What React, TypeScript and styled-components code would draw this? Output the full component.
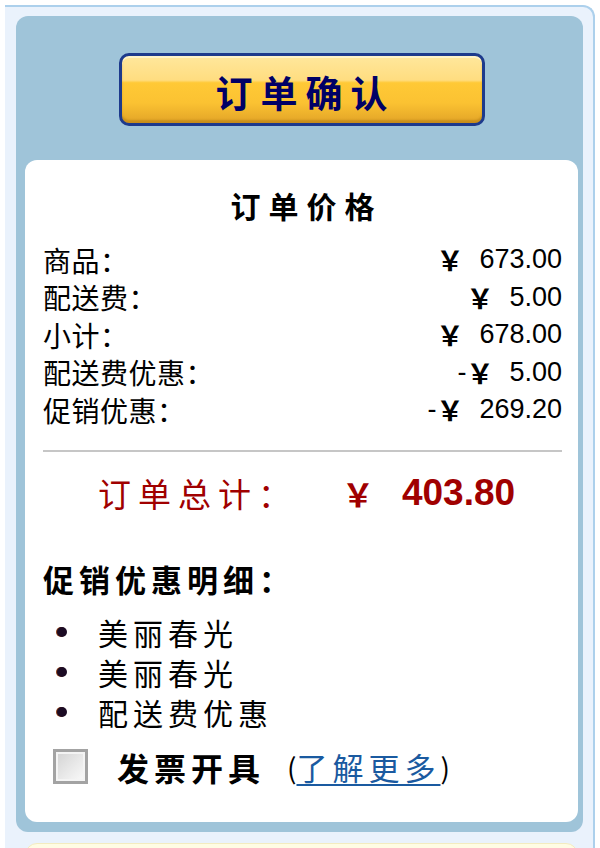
import styled, { createGlobalStyle } from "styled-components";

const GlobalStyle = createGlobalStyle`
  html, body {
    margin: 0;
    padding: 0;
    background: #ffffff;
  }
  body {
    font-family: "Noto Sans CJK SC", "Noto Sans", sans-serif;
    color: #000;
  }
`;

/* внешняя рамка боковой колонки */
const Frame = styled.div`
  margin: 5px 0 0 5px;
  width: 590px;
  height: 843px;
  box-sizing: border-box;
  background: #eaf2fc;
  border-top: 2px solid #acd0ec;
  border-right: 2px solid #acd0ec;
  border-top-right-radius: 12px;
  padding: 9px 10px 0 11px;
  overflow: hidden;
  display: flex;
  flex-direction: column;
  gap: 11px;
`;

const Panel = styled.div`
  background: #9fc4d9;
  border-radius: 12px;
  padding: 37px 5px 10px 9px;
  display: flex;
  flex-direction: column;
  gap: 34px;
`;

const ConfirmButton = styled.button`
  align-self: center;
  width: 366px;
  height: 73px;
  border: 3px solid #1d3a8c;
  border-radius: 10px;
  background: linear-gradient(
    to bottom,
    #ffe79c 0%,
    #ffdd80 36%,
    #ffc936 40%,
    #fbc232 70%,
    #e2a427 100%
  );
  box-shadow: inset 0 2px 0 #fff3c8, inset 0 -3px 2px rgba(150, 100, 0, 0.35);
  color: #000066;
  font-family: "Noto Sans CJK SC", sans-serif;
  font-size: 37px;
  font-weight: 700;
  letter-spacing: 8px;
  padding: 4px 0 0 8px;
  cursor: pointer;
`;

const Card = styled.div<{ $tone?: "white" | "note" }>`
  background: ${({ $tone }) => ($tone === "note" ? "#fffce4" : "#ffffff")};
  border-radius: 12px;
  padding: 25px 16px 0 18px;
  height: ${({ $tone }) => ($tone === "note" ? "40px" : "662px")};
  box-sizing: border-box;
  ${({ $tone }) =>
    $tone === "note" ? "margin: 0 5px 0 9px; border: 1px solid #f3ecc0;" : ""}
`;

const Title = styled.div`
  text-align: center;
  font-size: 30px;
  font-weight: 700;
  line-height: 40px;
  letter-spacing: 8px;
  padding-left: 8px;
`;

const PriceList = styled.div`
  margin-top: 16px;
  display: flex;
  flex-direction: column;
`;

const PriceRow = styled.div`
  display: flex;
  justify-content: space-between;
  align-items: center;
  height: 37.5px;
  font-size: 28px;
`;

const Label = styled.span`
  letter-spacing: 0.5px;
`;

const Amount = styled.span`
  display: inline-flex;
  align-items: center;
  font-family: "Liberation Sans", Arial, sans-serif;
  font-size: 27px;
`;

const Yen = styled.span`
  font-family: "Noto Sans CJK SC", sans-serif;
  font-size: 27px;
  font-weight: 700;
  margin-right: 16px;
`;

const Divider = styled.hr`
  margin: 21px 0 0;
  border: 0;
  height: 2px;
  background: #c6c6c6;
`;

const Total = styled.div`
  margin-top: 19px;
  height: 44px;
  display: flex;
  align-items: center;
  justify-content: center;
  color: #a00000;
  padding-left: 8px;
`;

const TotalLabel = styled.span`
  font-size: 33px;
  letter-spacing: 7px;
`;

const TotalYen = styled.span`
  font-size: 32px;
  font-weight: 700;
  margin: 0 28px 0 44px;
`;

const TotalValue = styled.span`
  font-family: "Liberation Sans", Arial, sans-serif;
  font-size: 37px;
  font-weight: 700;
`;

const SectionTitle = styled.div`
  margin-top: 44px;
  font-size: 31px;
  font-weight: 700;
  line-height: 40px;
  letter-spacing: 5px;
`;

const PromoList = styled.ul`
  list-style: none;
  margin: 13px 0 0;
  padding: 0 0 0 14px;
`;

const PromoItem = styled.li`
  display: flex;
  align-items: center;
  height: 40px;
  font-size: 30px;
  letter-spacing: 5px;

  &::before {
    content: "";
    width: 10px;
    height: 10px;
    border-radius: 50%;
    background: #1b0b24;
    box-shadow: -1px 0 0 #8a3a10;
    margin-right: 31px;
  }
`;

const InvoiceRow = styled.label`
  margin-top: 15px;
  display: flex;
  align-items: center;
  height: 40px;
  padding-left: 10px;
  cursor: pointer;
`;

const CheckBox = styled.span`
  width: 35px;
  height: 35px;
  box-sizing: border-box;
  border: 3px solid #a3a3a3;
  box-shadow: inset 0 0 0 2px #f4f4f4;
  background: linear-gradient(135deg, #d2d2d2 0%, #e9e9e9 55%, #fafafa 100%);
  margin-right: 29px;
`;

const InvoiceText = styled.span`
  font-size: 32px;
  font-weight: 700;
  letter-spacing: 5px;
  margin-right: 22px;
`;

const Paren = styled.span`
  font-size: 28px;
`;

const MoreLink = styled.a`
  color: #1a5aa0;
  font-size: 31px;
  letter-spacing: 5px;
  text-decoration: underline;
  text-decoration-thickness: 2px;
  text-underline-offset: 4px;
`;

type Line = { label: string; value: string; minus?: boolean };

const lines: Line[] = [
  { label: "商品：", value: "673.00" },
  { label: "配送费：", value: "5.00" },
  { label: "小计：", value: "678.00" },
  { label: "配送费优惠：", value: "5.00", minus: true },
  { label: "促销优惠：", value: "269.20", minus: true },
];

const promos = ["美丽春光", "美丽春光", "配送费优惠"];

export default function App() {
  return (
    <>
      <GlobalStyle />
      <Frame>
        <Panel>
          <ConfirmButton>订单确认</ConfirmButton>
          <Card>
            <Title>订单价格</Title>
            <PriceList>
              {lines.map((l) => (
                <PriceRow key={l.label}>
                  <Label>{l.label}</Label>
                  <Amount>
                    {l.minus ? "-" : null}
                    <Yen>￥</Yen>
                    {l.value}
                  </Amount>
                </PriceRow>
              ))}
            </PriceList>
            <Divider />
            <Total>
              <TotalLabel>订单总计：</TotalLabel>
              <TotalYen>￥</TotalYen>
              <TotalValue>403.80</TotalValue>
            </Total>
            <SectionTitle>促销优惠明细：</SectionTitle>
            <PromoList>
              {promos.map((p, i) => (
                <PromoItem key={i}>{p}</PromoItem>
              ))}
            </PromoList>
            <InvoiceRow>
              <CheckBox />
              <InvoiceText>发票开具</InvoiceText>
              <Paren>(</Paren>
              <MoreLink href="#">了解更多</MoreLink>
              <Paren>)</Paren>
            </InvoiceRow>
          </Card>
        </Panel>
        <Card $tone="note" />
      </Frame>
    </>
  );
}
